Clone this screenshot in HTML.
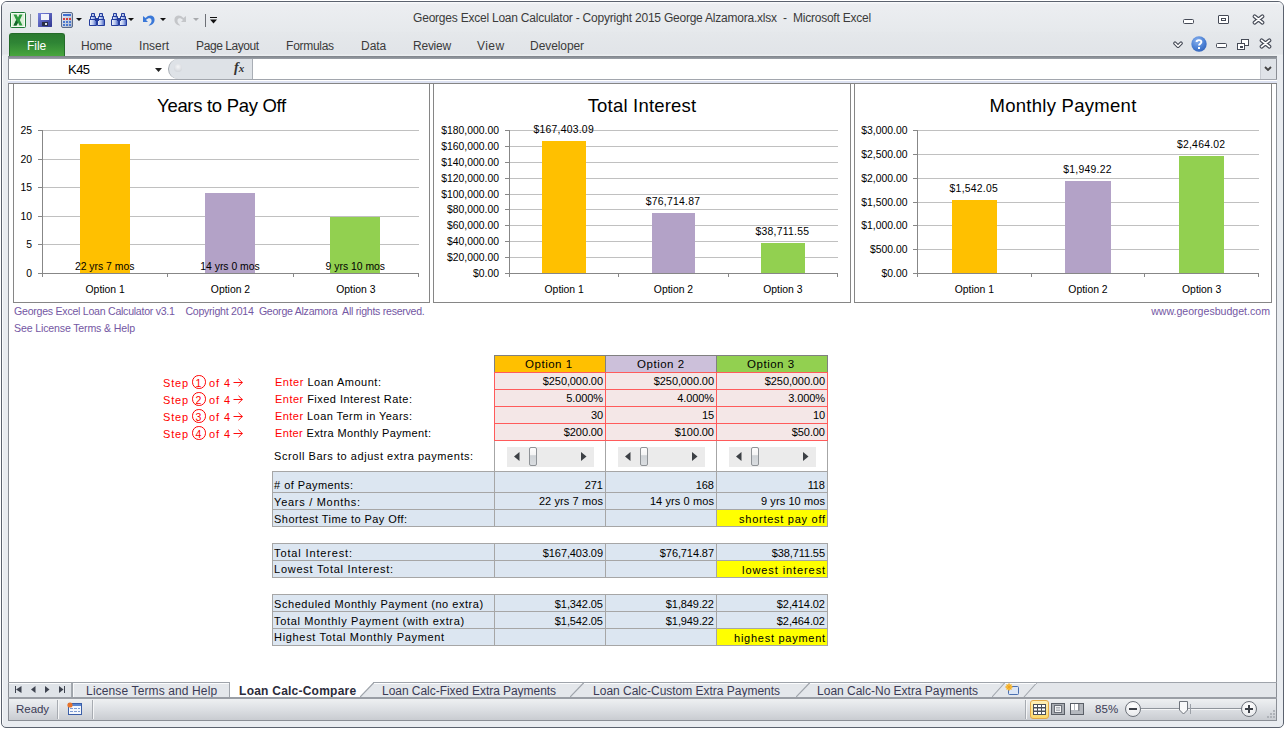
<!DOCTYPE html>
<html><head><meta charset="utf-8">
<style>
*{margin:0;padding:0;box-sizing:border-box}
html,body{width:1285px;height:729px;overflow:hidden;background:#fff;font-family:"Liberation Sans",sans-serif}
.a{position:absolute}
.t{position:absolute;white-space:nowrap;line-height:1}
#win{left:1px;top:1px;width:1283px;height:727px;border:1px solid #5b626e;border-radius:6px 6px 5px 5px;background:#e9ecf0;box-shadow:inset 1px 1px 0 #fafbfc;overflow:hidden}
</style></head><body>
<div id="win" class="a"></div>
<!-- title bar gradient -->
<div class="a" style="left:2px;top:2px;width:1281px;height:30px;border-radius:5px 5px 0 0;background:linear-gradient(#f7f8fa 0,#f7f8fa 1px,#eceef1 2px,#e6e9ec)"></div>
<div class="a" style="left:2px;top:32px;width:1281px;height:24px;background:linear-gradient(#e5e8eb,#e1e4e8 90%,#eef0f2)"></div>
<!-- ribbon dark line -->
<div class="a" style="left:8px;top:56px;width:1269px;height:3px;background:linear-gradient(#7d8289,#9ca1a8)"></div>
<!-- formula bar -->
<div class="a" style="left:8px;top:59px;width:1269px;height:20px;background:#fff;border-left:1px solid #8a8e95;border-right:1px solid #8a8e95"></div>
<div class="a" style="left:8px;top:79px;width:1269px;height:1px;background:#a2a6ad"></div>
<div class="a" style="left:8px;top:80px;width:1269px;height:1px;background:#fff"></div>
<div class="a" style="left:8px;top:81px;width:1269px;height:2px;background:#dde2f2"></div>
<div class="a" style="left:8px;top:83px;width:1269px;height:1px;background:#858585"></div>
<!-- sheet -->
<div class="a" style="left:8px;top:84px;width:1269px;height:599px;background:#fff;border-left:1px solid #8a8e95;border-right:1px solid #8a8e95"></div>
<!-- tab bar -->
<div class="a" style="left:8px;top:682px;width:1269px;height:1px;background:#9ea2a8"></div>
<div class="a" style="left:8px;top:683px;width:1269px;height:14px;background:#e3e6ea;border-left:1px solid #8a8e95;border-right:1px solid #8a8e95"></div>
<div class="a" style="left:8px;top:697px;width:1269px;height:2px;background:#9a9ea5"></div>
<!-- status bar -->
<div class="a" style="left:8px;top:699px;width:1269px;height:22px;background:linear-gradient(#eef0f2,#dcdfe3 50%,#c9ccd1);border-left:1px solid #8a8e95;border-right:1px solid #8a8e95;border-bottom:1px solid #8a8e95"></div>

<!-- QAT icons -->
<svg class="a" style="left:10px;top:12px" width="17" height="16" viewBox="0 0 17 16">
 <rect x="0.5" y="0.5" width="15" height="15" rx="1" fill="#f4fbf2" stroke="#1e7a36"/>
 <rect x="2" y="2" width="12" height="12" fill="#dcefd8"/>
 <path d="M3.5 2.5 L6.5 2.5 L8 5.5 L9.5 2.5 L12.5 2.5 L9.8 8 L12.5 13.5 L9.5 13.5 L8 10.5 L6.5 13.5 L3.5 13.5 L6.2 8 Z" fill="#2d9a3e"/>
 <path d="M6.2 8 L3.5 13.5 L6.5 13.5 L8 10.5 Z" fill="#13652a"/>
</svg>
<div class="a" style="left:30px;top:14px;width:1px;height:13px;background:#9197a0"></div>
<svg class="a" style="left:38px;top:13px" width="14" height="14" viewBox="0 0 14 14">
 <rect x="0" y="0" width="14" height="14" rx="1" fill="#4b55b8"/>
 <rect x="0" y="0" width="14" height="14" rx="1" fill="url(#sg)"/>
 <defs><linearGradient id="sg" x1="0" y1="0" x2="1" y2="1"><stop offset="0" stop-color="#7c86e0"/><stop offset="1" stop-color="#2f3590"/></linearGradient></defs>
 <rect x="3" y="1" width="8" height="6" fill="#f2f4fa"/>
 <rect x="4" y="9" width="6" height="4" fill="#2a2e44"/>
 <rect x="7" y="10" width="2" height="2" fill="#dfe3ef"/>
</svg>
<svg class="a" style="left:61px;top:12px" width="12" height="16" viewBox="0 0 12 16">
 <defs><linearGradient id="cg" x1="0" y1="0" x2="1" y2="1"><stop offset="0" stop-color="#e9eef8"/><stop offset="1" stop-color="#a9b5c9"/></linearGradient></defs>
 <rect x="0.5" y="0.5" width="11" height="15" rx="1.5" fill="url(#cg)" stroke="#5a6a88"/>
 <rect x="2" y="2" width="8" height="2" fill="#3f6fd0"/>
 <g fill="#d04040"><rect x="2" y="6" width="2" height="2"/><rect x="5" y="6" width="2" height="2"/><rect x="8" y="6" width="2" height="2"/></g>
 <g fill="#4a78cf"><rect x="2" y="9" width="2" height="2"/><rect x="5" y="9" width="2" height="2"/><rect x="8" y="9" width="2" height="2"/><rect x="2" y="12" width="2" height="2"/><rect x="5" y="12" width="2" height="2"/><rect x="8" y="12" width="2" height="2"/></g>
</svg>
<svg class="a" style="left:76px;top:18px" width="6" height="3" viewBox="0 0 6 3"><path d="M0 0H6L3 3Z" fill="#111"/></svg>
<svg class="a" style="left:89px;top:13px" width="16" height="13" viewBox="0 0 16 13">
 <defs><linearGradient id="bg1" x1="0" y1="0" x2="1" y2="0"><stop offset="0" stop-color="#f4f7fd"/><stop offset="0.5" stop-color="#b9c8ee"/><stop offset="1" stop-color="#3d5bc0"/></linearGradient></defs>
 <g fill="url(#bg1)" stroke="#233c9c" stroke-width="1">
 <path d="M2.5 0.5h3v3h1v3h1v6h-7v-6h1v-3h1z"/><path d="M10.5 0.5h3v3h1v3h1v6h-7v-6h1v-3h1z"/></g>
 <rect x="6" y="5" width="4" height="3" fill="#233c9c"/>
 <g fill="#233c9c"><rect x="1" y="6" width="6" height="1"/><rect x="9" y="6" width="6" height="1"/><rect x="2" y="3" width="4" height="1"/><rect x="10" y="3" width="4" height="1"/></g>
</svg>
<svg class="a" style="left:111px;top:13px" width="16" height="13" viewBox="0 0 16 13">
 <defs><linearGradient id="bg1" x1="0" y1="0" x2="1" y2="0"><stop offset="0" stop-color="#f4f7fd"/><stop offset="0.5" stop-color="#b9c8ee"/><stop offset="1" stop-color="#3d5bc0"/></linearGradient></defs>
 <g fill="url(#bg1)" stroke="#233c9c" stroke-width="1">
 <path d="M2.5 0.5h3v3h1v3h1v6h-7v-6h1v-3h1z"/><path d="M10.5 0.5h3v3h1v3h1v6h-7v-6h1v-3h1z"/></g>
 <rect x="6" y="5" width="4" height="3" fill="#233c9c"/>
 <g fill="#233c9c"><rect x="1" y="6" width="6" height="1"/><rect x="9" y="6" width="6" height="1"/><rect x="2" y="3" width="4" height="1"/><rect x="10" y="3" width="4" height="1"/></g>
</svg>
<svg class="a" style="left:128px;top:18px" width="6" height="3" viewBox="0 0 6 3"><path d="M0 0H6L3 3Z" fill="#111"/></svg>
<svg class="a" style="left:142px;top:13px" width="14" height="13" viewBox="0 0 14 13">
 <path d="M1 3 L1 9 L6 9 L4 7 C6 4.5 9 4.5 9.5 7 C10 9 8.5 11 6.5 12.5 C10 12.5 13 10 12.5 6 C12 2 7 1 3.5 5 Z" fill="#3a78d8"/>
</svg>
<svg class="a" style="left:160px;top:18px" width="6" height="3" viewBox="0 0 6 3"><path d="M0 0H6L3 3Z" fill="#111"/></svg>
<svg class="a" style="left:173px;top:13px" width="14" height="13" viewBox="0 0 14 13">
 <path d="M13 3 L13 9 L8 9 L10 7 C8 4.5 5 4.5 4.5 7 C4 9 5.5 11 7.5 12.5 C4 12.5 1 10 1.5 6 C2 2 7 1 10.5 5 Z" fill="#c4c6c9"/>
</svg>
<svg class="a" style="left:193px;top:18px" width="6" height="3" viewBox="0 0 6 3"><path d="M0 0H6L3 3Z" fill="#a8aaad"/></svg>
<div class="a" style="left:205px;top:14px;width:1px;height:13px;background:#6d7076"></div>
<svg class="a" style="left:210px;top:17px" width="7" height="7" viewBox="0 0 7 7"><rect x="0" y="0" width="7" height="1" fill="#111"/><path d="M0 2.5H7L3.5 6.5Z" fill="#111"/></svg>
<!-- title -->
<!-- window controls -->
<div class="a" style="left:1183px;top:19px;width:11px;height:5px;border:1px solid #454a56;border-radius:1.5px;background:#fff"></div>
<div class="a" style="left:1218px;top:15px;width:11px;height:9px;border:1px solid #454a56;border-radius:1px;background:#fff"></div>
<div class="a" style="left:1221px;top:18px;width:5px;height:3px;border:1px solid #454a56;background:#fff"></div>
<svg class="a" style="left:1252px;top:14px" width="13" height="11" viewBox="0 0 13 11"><path d="M2.6 2.4 L10.4 8.6 M10.4 2.4 L2.6 8.6" stroke="#454a56" stroke-width="3.9" stroke-linecap="round"/><path d="M2.6 2.4 L10.4 8.6 M10.4 2.4 L2.6 8.6" stroke="#fff" stroke-width="1.8" stroke-linecap="round"/></svg>
<!-- ribbon tabs -->
<div class="a" style="left:9px;top:33px;width:56px;height:23px;border-radius:3px 3px 0 0;background:linear-gradient(#2b7a30,#2f8535 40%,#49a63e);border:1px solid #246b29;border-bottom:none"></div>
<!-- ribbon right controls -->
<svg class="a" style="left:1173px;top:41px" width="10" height="8" viewBox="0 0 10 8"><path d="M2 2.2 L5 5.2 L8 2.2" stroke="#454a56" stroke-width="3.6" fill="none" stroke-linecap="round" stroke-linejoin="round"/><path d="M2 2.2 L5 5.2 L8 2.2" stroke="#fff" stroke-width="1.5" fill="none" stroke-linecap="round" stroke-linejoin="round"/></svg>
<svg class="a" style="left:1191px;top:36px" width="16" height="16" viewBox="0 0 16 16">
 <defs><radialGradient id="hg" cx="0.4" cy="0.3" r="0.8"><stop offset="0" stop-color="#8bb3ef"/><stop offset="0.6" stop-color="#4a7fd3"/><stop offset="1" stop-color="#2f5fb6"/></radialGradient></defs>
 <circle cx="8" cy="8" r="7.7" fill="url(#hg)"/>
 <path d="M5.6 6 C5.6 3.5 10.4 3.5 10.4 6 C10.4 7.6 8 7.8 8 9.6" stroke="#fff" stroke-width="1.9" fill="none"/>
 <rect x="7" y="11" width="2" height="2" fill="#fff"/>
</svg>
<div class="a" style="left:1216px;top:43px;width:11px;height:5px;border:1px solid #454a56;border-radius:1.5px;background:#fff"></div>
<div class="a" style="left:1241px;top:39px;width:8px;height:7px;border:1px solid #454a56;background:#fff"></div>
<div class="a" style="left:1237px;top:43px;width:8px;height:7px;border:1px solid #454a56;background:#fff"></div>
<div class="a" style="left:1240px;top:46px;width:3px;height:2px;border:1px solid #454a56;background:#fff"></div>
<svg class="a" style="left:1259px;top:38px" width="13" height="11" viewBox="0 0 13 11"><path d="M2.6 2.4 L10.4 8.6 M10.4 2.4 L2.6 8.6" stroke="#454a56" stroke-width="3.9" stroke-linecap="round"/><path d="M2.6 2.4 L10.4 8.6 M10.4 2.4 L2.6 8.6" stroke="#fff" stroke-width="1.8" stroke-linecap="round"/></svg>
<!-- formula bar contents -->
<svg class="a" style="left:155px;top:68px" width="7" height="4" viewBox="0 0 7 4"><path d="M0 0H7L3.5 4Z" fill="#222"/></svg>
<div class="a" style="left:168px;top:59px;width:85px;height:20px;background:#dee2e7;border-radius:10px 0 0 10px;border:1px solid #a7acb3;border-right:1px solid #a9aeb5;border-top:none;border-bottom:none"></div>
<div class="a" style="left:174px;top:64px;width:8px;height:8px;border-radius:50%;background:radial-gradient(circle at 50% 35%,#f4f5f7,#c9cdd3)"></div>
<div class="t" style="left:234px;top:61px;font-family:'Liberation Serif',serif;font-style:italic;font-weight:bold;font-size:14px;color:#333">f<span style="font-size:11px">x</span></div>
<div class="a" style="left:1260px;top:59px;width:16px;height:20px;background:#dfe3e8;border-left:1px solid #c9cdd3"></div>
<svg class="a" style="left:1264px;top:66px" width="8" height="5" viewBox="0 0 8 5"><path d="M1 1 L4 4 L7 1" stroke="#444" stroke-width="1.8" fill="none"/></svg>
<div class="a" style="left:13px;top:84px;width:417px;height:219px;background:#fff;border:1px solid #868686;border-top:none"></div>
<div class="t" style="left:21.5px;width:400px;top:96.5px;font-size:18.5px;color:#000;text-align:center;letter-spacing:-0.3px">Years to Pay Off</div>
<div class="a" style="left:42px;top:130px;width:377px;height:1px;background:#c0c0c0;"></div>
<div class="a" style="left:42px;top:159px;width:377px;height:1px;background:#c0c0c0;"></div>
<div class="a" style="left:42px;top:187px;width:377px;height:1px;background:#c0c0c0;"></div>
<div class="a" style="left:42px;top:216px;width:377px;height:1px;background:#c0c0c0;"></div>
<div class="a" style="left:42px;top:244px;width:377px;height:1px;background:#c0c0c0;"></div>
<div class="a" style="left:42px;top:130px;width:1px;height:144px;background:#878787;"></div>
<div class="a" style="left:38px;top:130px;width:4px;height:1px;background:#878787;"></div>
<div class="a" style="left:38px;top:159px;width:4px;height:1px;background:#878787;"></div>
<div class="a" style="left:38px;top:187px;width:4px;height:1px;background:#878787;"></div>
<div class="a" style="left:38px;top:216px;width:4px;height:1px;background:#878787;"></div>
<div class="a" style="left:38px;top:244px;width:4px;height:1px;background:#878787;"></div>
<div class="a" style="left:38px;top:273px;width:4px;height:1px;background:#878787;"></div>
<div class="t" style="right:1253px;top:125.5px;font-size:10.4px;color:#000;text-align:right;">25</div>
<div class="t" style="right:1253px;top:154.5px;font-size:10.4px;color:#000;text-align:right;">20</div>
<div class="t" style="right:1253px;top:182.5px;font-size:10.4px;color:#000;text-align:right;">15</div>
<div class="t" style="right:1253px;top:211.5px;font-size:10.4px;color:#000;text-align:right;">10</div>
<div class="t" style="right:1253px;top:239.5px;font-size:10.4px;color:#000;text-align:right;">5</div>
<div class="t" style="right:1253px;top:268.5px;font-size:10.4px;color:#000;text-align:right;">0</div>
<div class="a" style="left:80px;top:144px;width:50px;height:129px;background:#ffc000;"></div>
<div class="a" style="left:205px;top:193px;width:50px;height:80px;background:#b3a2c7;"></div>
<div class="a" style="left:330px;top:217px;width:50px;height:56px;background:#92d050;"></div>
<div class="a" style="left:42px;top:273px;width:377px;height:1px;background:#878787;"></div>
<div class="a" style="left:42px;top:274px;width:1px;height:3px;background:#878787;"></div>
<div class="a" style="left:167px;top:274px;width:1px;height:3px;background:#878787;"></div>
<div class="a" style="left:293px;top:274px;width:1px;height:3px;background:#878787;"></div>
<div class="a" style="left:418px;top:274px;width:1px;height:3px;background:#878787;"></div>
<div class="t" style="left:-94.83333333333334px;width:400px;top:285px;font-size:10.4px;color:#000;text-align:center;">Option 1</div>
<div class="t" style="left:30.5px;width:400px;top:285px;font-size:10.4px;color:#000;text-align:center;">Option 2</div>
<div class="t" style="left:155.83333333333331px;width:400px;top:285px;font-size:10.4px;color:#000;text-align:center;">Option 3</div>
<div class="t" style="left:-95.33333333333334px;width:400px;top:262px;font-size:10.4px;color:#000;text-align:center;letter-spacing:0px">22 yrs 7 mos</div>
<div class="t" style="left:30.0px;width:400px;top:262px;font-size:10.4px;color:#000;text-align:center;letter-spacing:0px">14 yrs 0 mos</div>
<div class="t" style="left:155.33333333333331px;width:400px;top:262px;font-size:10.4px;color:#000;text-align:center;letter-spacing:0px">9 yrs 10 mos</div>
<div class="a" style="left:433px;top:84px;width:418px;height:219px;background:#fff;border:1px solid #868686;border-top:none"></div>
<div class="t" style="left:442.0px;width:400px;top:96.5px;font-size:18.5px;color:#000;text-align:center;letter-spacing:0.2px">Total Interest</div>
<div class="a" style="left:509px;top:130px;width:329px;height:1px;background:#c0c0c0;"></div>
<div class="a" style="left:509px;top:146px;width:329px;height:1px;background:#c0c0c0;"></div>
<div class="a" style="left:509px;top:162px;width:329px;height:1px;background:#c0c0c0;"></div>
<div class="a" style="left:509px;top:178px;width:329px;height:1px;background:#c0c0c0;"></div>
<div class="a" style="left:509px;top:194px;width:329px;height:1px;background:#c0c0c0;"></div>
<div class="a" style="left:509px;top:209px;width:329px;height:1px;background:#c0c0c0;"></div>
<div class="a" style="left:509px;top:225px;width:329px;height:1px;background:#c0c0c0;"></div>
<div class="a" style="left:509px;top:241px;width:329px;height:1px;background:#c0c0c0;"></div>
<div class="a" style="left:509px;top:257px;width:329px;height:1px;background:#c0c0c0;"></div>
<div class="a" style="left:509px;top:130px;width:1px;height:144px;background:#878787;"></div>
<div class="a" style="left:505px;top:130px;width:4px;height:1px;background:#878787;"></div>
<div class="a" style="left:505px;top:146px;width:4px;height:1px;background:#878787;"></div>
<div class="a" style="left:505px;top:162px;width:4px;height:1px;background:#878787;"></div>
<div class="a" style="left:505px;top:178px;width:4px;height:1px;background:#878787;"></div>
<div class="a" style="left:505px;top:194px;width:4px;height:1px;background:#878787;"></div>
<div class="a" style="left:505px;top:209px;width:4px;height:1px;background:#878787;"></div>
<div class="a" style="left:505px;top:225px;width:4px;height:1px;background:#878787;"></div>
<div class="a" style="left:505px;top:241px;width:4px;height:1px;background:#878787;"></div>
<div class="a" style="left:505px;top:257px;width:4px;height:1px;background:#878787;"></div>
<div class="a" style="left:505px;top:273px;width:4px;height:1px;background:#878787;"></div>
<div class="t" style="right:786px;top:125.5px;font-size:10.4px;color:#000;text-align:right;">$180,000.00</div>
<div class="t" style="right:786px;top:141.5px;font-size:10.4px;color:#000;text-align:right;">$160,000.00</div>
<div class="t" style="right:786px;top:157.5px;font-size:10.4px;color:#000;text-align:right;">$140,000.00</div>
<div class="t" style="right:786px;top:173.5px;font-size:10.4px;color:#000;text-align:right;">$120,000.00</div>
<div class="t" style="right:786px;top:189.5px;font-size:10.4px;color:#000;text-align:right;">$100,000.00</div>
<div class="t" style="right:786px;top:204.5px;font-size:10.4px;color:#000;text-align:right;">$80,000.00</div>
<div class="t" style="right:786px;top:220.5px;font-size:10.4px;color:#000;text-align:right;">$60,000.00</div>
<div class="t" style="right:786px;top:236.5px;font-size:10.4px;color:#000;text-align:right;">$40,000.00</div>
<div class="t" style="right:786px;top:252.5px;font-size:10.4px;color:#000;text-align:right;">$20,000.00</div>
<div class="t" style="right:786px;top:268.5px;font-size:10.4px;color:#000;text-align:right;">$0.00</div>
<div class="a" style="left:542px;top:141px;width:44px;height:132px;background:#ffc000;"></div>
<div class="a" style="left:652px;top:213px;width:43px;height:60px;background:#b3a2c7;"></div>
<div class="a" style="left:761px;top:243px;width:44px;height:30px;background:#92d050;"></div>
<div class="a" style="left:509px;top:273px;width:329px;height:1px;background:#878787;"></div>
<div class="a" style="left:509px;top:274px;width:1px;height:3px;background:#878787;"></div>
<div class="a" style="left:618px;top:274px;width:1px;height:3px;background:#878787;"></div>
<div class="a" style="left:728px;top:274px;width:1px;height:3px;background:#878787;"></div>
<div class="a" style="left:837px;top:274px;width:1px;height:3px;background:#878787;"></div>
<div class="t" style="left:364.16666666666663px;width:400px;top:285px;font-size:10.4px;color:#000;text-align:center;">Option 1</div>
<div class="t" style="left:473.5px;width:400px;top:285px;font-size:10.4px;color:#000;text-align:center;">Option 2</div>
<div class="t" style="left:582.8333333333333px;width:400px;top:285px;font-size:10.4px;color:#000;text-align:center;">Option 3</div>
<div class="t" style="left:363.66666666666663px;width:400px;top:124.5px;font-size:10.4px;color:#000;text-align:center;letter-spacing:0.25px">$167,403.09</div>
<div class="t" style="left:473.0px;width:400px;top:196.5px;font-size:10.4px;color:#000;text-align:center;letter-spacing:0.25px">$76,714.87</div>
<div class="t" style="left:582.3333333333333px;width:400px;top:226.5px;font-size:10.4px;color:#000;text-align:center;letter-spacing:0.25px">$38,711.55</div>
<div class="a" style="left:854px;top:84px;width:418px;height:219px;background:#fff;border:1px solid #868686;border-top:none"></div>
<div class="t" style="left:863.0px;width:400px;top:96.5px;font-size:18.5px;color:#000;text-align:center;letter-spacing:0.28px">Monthly Payment</div>
<div class="a" style="left:917px;top:130px;width:342px;height:1px;background:#c0c0c0;"></div>
<div class="a" style="left:917px;top:154px;width:342px;height:1px;background:#c0c0c0;"></div>
<div class="a" style="left:917px;top:178px;width:342px;height:1px;background:#c0c0c0;"></div>
<div class="a" style="left:917px;top:202px;width:342px;height:1px;background:#c0c0c0;"></div>
<div class="a" style="left:917px;top:225px;width:342px;height:1px;background:#c0c0c0;"></div>
<div class="a" style="left:917px;top:249px;width:342px;height:1px;background:#c0c0c0;"></div>
<div class="a" style="left:917px;top:130px;width:1px;height:144px;background:#878787;"></div>
<div class="a" style="left:913px;top:130px;width:4px;height:1px;background:#878787;"></div>
<div class="a" style="left:913px;top:154px;width:4px;height:1px;background:#878787;"></div>
<div class="a" style="left:913px;top:178px;width:4px;height:1px;background:#878787;"></div>
<div class="a" style="left:913px;top:202px;width:4px;height:1px;background:#878787;"></div>
<div class="a" style="left:913px;top:225px;width:4px;height:1px;background:#878787;"></div>
<div class="a" style="left:913px;top:249px;width:4px;height:1px;background:#878787;"></div>
<div class="a" style="left:913px;top:273px;width:4px;height:1px;background:#878787;"></div>
<div class="t" style="right:377.5px;top:125.5px;font-size:10.4px;color:#000;text-align:right;">$3,000.00</div>
<div class="t" style="right:377.5px;top:149.5px;font-size:10.4px;color:#000;text-align:right;">$2,500.00</div>
<div class="t" style="right:377.5px;top:173.5px;font-size:10.4px;color:#000;text-align:right;">$2,000.00</div>
<div class="t" style="right:377.5px;top:197.5px;font-size:10.4px;color:#000;text-align:right;">$1,500.00</div>
<div class="t" style="right:377.5px;top:220.5px;font-size:10.4px;color:#000;text-align:right;">$1,000.00</div>
<div class="t" style="right:377.5px;top:244.5px;font-size:10.4px;color:#000;text-align:right;">$500.00</div>
<div class="t" style="right:377.5px;top:268.5px;font-size:10.4px;color:#000;text-align:right;">$0.00</div>
<div class="a" style="left:952px;top:200px;width:45px;height:73px;background:#ffc000;"></div>
<div class="a" style="left:1065px;top:181px;width:46px;height:92px;background:#b3a2c7;"></div>
<div class="a" style="left:1179px;top:156px;width:45px;height:117px;background:#92d050;"></div>
<div class="a" style="left:917px;top:273px;width:342px;height:1px;background:#878787;"></div>
<div class="a" style="left:917px;top:274px;width:1px;height:3px;background:#878787;"></div>
<div class="a" style="left:1031px;top:274px;width:1px;height:3px;background:#878787;"></div>
<div class="a" style="left:1144px;top:274px;width:1px;height:3px;background:#878787;"></div>
<div class="a" style="left:1258px;top:274px;width:1px;height:3px;background:#878787;"></div>
<div class="t" style="left:774.3333333333334px;width:400px;top:285px;font-size:10.4px;color:#000;text-align:center;">Option 1</div>
<div class="t" style="left:888.0px;width:400px;top:285px;font-size:10.4px;color:#000;text-align:center;">Option 2</div>
<div class="t" style="left:1001.6666666666667px;width:400px;top:285px;font-size:10.4px;color:#000;text-align:center;">Option 3</div>
<div class="t" style="left:773.8333333333334px;width:400px;top:183.5px;font-size:10.4px;color:#000;text-align:center;letter-spacing:0.25px">$1,542.05</div>
<div class="t" style="left:887.5px;width:400px;top:164.5px;font-size:10.4px;color:#000;text-align:center;letter-spacing:0.25px">$1,949.22</div>
<div class="t" style="left:1001.1666666666667px;width:400px;top:139.5px;font-size:10.4px;color:#000;text-align:center;letter-spacing:0.25px">$2,464.02</div>
<div class="a" style="left:494px;top:355px;width:334px;height:18px;background:#808080;"></div>
<div class="a" style="left:495px;top:356px;width:110px;height:16px;background:#ffc000;"></div>
<div class="a" style="left:606px;top:356px;width:110px;height:16px;background:#ccc0da;"></div>
<div class="a" style="left:717px;top:356px;width:110px;height:16px;background:#92d050;"></div>
<div class="a" style="left:494px;top:372px;width:334px;height:69px;background:#ff5b5b;"></div>
<div class="a" style="left:495px;top:373px;width:110px;height:16px;background:#f4e7e7;"></div>
<div class="a" style="left:606px;top:373px;width:110px;height:16px;background:#f4e7e7;"></div>
<div class="a" style="left:717px;top:373px;width:110px;height:16px;background:#f4e7e7;"></div>
<div class="a" style="left:495px;top:390px;width:110px;height:16px;background:#f4e7e7;"></div>
<div class="a" style="left:606px;top:390px;width:110px;height:16px;background:#f4e7e7;"></div>
<div class="a" style="left:717px;top:390px;width:110px;height:16px;background:#f4e7e7;"></div>
<div class="a" style="left:495px;top:407px;width:110px;height:16px;background:#f4e7e7;"></div>
<div class="a" style="left:606px;top:407px;width:110px;height:16px;background:#f4e7e7;"></div>
<div class="a" style="left:717px;top:407px;width:110px;height:16px;background:#f4e7e7;"></div>
<div class="a" style="left:495px;top:424px;width:110px;height:16px;background:#f4e7e7;"></div>
<div class="a" style="left:606px;top:424px;width:110px;height:16px;background:#f4e7e7;"></div>
<div class="a" style="left:717px;top:424px;width:110px;height:16px;background:#f4e7e7;"></div>
<div class="a" style="left:494px;top:441px;width:1px;height:30px;background:#a6a6a6;"></div>
<div class="a" style="left:605px;top:441px;width:1px;height:30px;background:#a6a6a6;"></div>
<div class="a" style="left:716px;top:441px;width:1px;height:30px;background:#a6a6a6;"></div>
<div class="a" style="left:827px;top:441px;width:1px;height:30px;background:#a6a6a6;"></div>
<div class="a" style="left:272px;top:471px;width:556px;height:56px;background:#a6a6a6;"></div>
<div class="a" style="left:273px;top:472px;width:221px;height:20px;background:#dce6f1;"></div>
<div class="a" style="left:495px;top:472px;width:110px;height:20px;background:#dce6f1;"></div>
<div class="a" style="left:606px;top:472px;width:110px;height:20px;background:#dce6f1;"></div>
<div class="a" style="left:717px;top:472px;width:110px;height:20px;background:#dce6f1;"></div>
<div class="a" style="left:273px;top:493px;width:221px;height:16px;background:#dce6f1;"></div>
<div class="a" style="left:495px;top:493px;width:110px;height:16px;background:#dce6f1;"></div>
<div class="a" style="left:606px;top:493px;width:110px;height:16px;background:#dce6f1;"></div>
<div class="a" style="left:717px;top:493px;width:110px;height:16px;background:#dce6f1;"></div>
<div class="a" style="left:273px;top:510px;width:221px;height:16px;background:#dce6f1;"></div>
<div class="a" style="left:495px;top:510px;width:110px;height:16px;background:#dce6f1;"></div>
<div class="a" style="left:606px;top:510px;width:110px;height:16px;background:#dce6f1;"></div>
<div class="a" style="left:717px;top:510px;width:110px;height:16px;background:#dce6f1;"></div>
<div class="a" style="left:272px;top:543px;width:556px;height:35px;background:#a6a6a6;"></div>
<div class="a" style="left:273px;top:544px;width:221px;height:16px;background:#dce6f1;"></div>
<div class="a" style="left:495px;top:544px;width:110px;height:16px;background:#dce6f1;"></div>
<div class="a" style="left:606px;top:544px;width:110px;height:16px;background:#dce6f1;"></div>
<div class="a" style="left:717px;top:544px;width:110px;height:16px;background:#dce6f1;"></div>
<div class="a" style="left:273px;top:561px;width:221px;height:16px;background:#dce6f1;"></div>
<div class="a" style="left:495px;top:561px;width:110px;height:16px;background:#dce6f1;"></div>
<div class="a" style="left:606px;top:561px;width:110px;height:16px;background:#dce6f1;"></div>
<div class="a" style="left:717px;top:561px;width:110px;height:16px;background:#dce6f1;"></div>
<div class="a" style="left:272px;top:594px;width:556px;height:52px;background:#a6a6a6;"></div>
<div class="a" style="left:273px;top:595px;width:221px;height:16px;background:#dce6f1;"></div>
<div class="a" style="left:495px;top:595px;width:110px;height:16px;background:#dce6f1;"></div>
<div class="a" style="left:606px;top:595px;width:110px;height:16px;background:#dce6f1;"></div>
<div class="a" style="left:717px;top:595px;width:110px;height:16px;background:#dce6f1;"></div>
<div class="a" style="left:273px;top:612px;width:221px;height:16px;background:#dce6f1;"></div>
<div class="a" style="left:495px;top:612px;width:110px;height:16px;background:#dce6f1;"></div>
<div class="a" style="left:606px;top:612px;width:110px;height:16px;background:#dce6f1;"></div>
<div class="a" style="left:717px;top:612px;width:110px;height:16px;background:#dce6f1;"></div>
<div class="a" style="left:273px;top:629px;width:221px;height:16px;background:#dce6f1;"></div>
<div class="a" style="left:495px;top:629px;width:110px;height:16px;background:#dce6f1;"></div>
<div class="a" style="left:606px;top:629px;width:110px;height:16px;background:#dce6f1;"></div>
<div class="a" style="left:717px;top:629px;width:110px;height:16px;background:#dce6f1;"></div>
<div class="a" style="left:717px;top:510px;width:110px;height:16px;background:#ffff00;"></div>
<div class="a" style="left:717px;top:561px;width:110px;height:16px;background:#ffff00;"></div>
<div class="a" style="left:717px;top:629px;width:110px;height:16px;background:#ffff00;"></div>
<div class="t" style="left:525.10px;top:359px;font-size:11.5px;color:#000;letter-spacing:0.504px;">Option 1</div>
<div class="t" style="left:637.10px;top:359px;font-size:11.5px;color:#000;letter-spacing:0.504px;">Option 2</div>
<div class="t" style="left:747.10px;top:359px;font-size:11.5px;color:#000;letter-spacing:0.504px;">Option 3</div>
<div class="t" style="left:542.84px;top:376px;font-size:11px;color:#000;letter-spacing:-0.100px;">$250,000.00</div>
<div class="t" style="left:653.84px;top:376px;font-size:11px;color:#000;letter-spacing:-0.100px;">$250,000.00</div>
<div class="t" style="left:764.84px;top:376px;font-size:11px;color:#000;letter-spacing:-0.100px;">$250,000.00</div>
<div class="t" style="left:566.21px;top:393px;font-size:11px;color:#000;letter-spacing:-0.100px;">5.000%</div>
<div class="t" style="left:677.21px;top:393px;font-size:11px;color:#000;letter-spacing:-0.100px;">4.000%</div>
<div class="t" style="left:788.21px;top:393px;font-size:11px;color:#000;letter-spacing:-0.100px;">3.000%</div>
<div class="t" style="left:590.89px;top:410px;font-size:11px;color:#000;letter-spacing:-0.100px;">30</div>
<div class="t" style="left:701.89px;top:410px;font-size:11px;color:#000;letter-spacing:-0.100px;">15</div>
<div class="t" style="left:812.89px;top:410px;font-size:11px;color:#000;letter-spacing:-0.100px;">10</div>
<div class="t" style="left:563.84px;top:427px;font-size:11px;color:#000;letter-spacing:-0.100px;">$200.00</div>
<div class="t" style="left:674.84px;top:427px;font-size:11px;color:#000;letter-spacing:-0.100px;">$100.00</div>
<div class="t" style="left:791.84px;top:427px;font-size:11px;color:#000;letter-spacing:-0.100px;">$50.00</div>
<div class="t" style="left:584.83px;top:480px;font-size:11px;color:#000;letter-spacing:-0.100px;">271</div>
<div class="t" style="left:695.83px;top:480px;font-size:11px;color:#000;letter-spacing:-0.100px;">168</div>
<div class="t" style="left:807.65px;top:480px;font-size:11px;color:#000;letter-spacing:-0.100px;">118</div>
<div class="t" style="left:538.92px;top:496px;font-size:11px;color:#000;letter-spacing:0.100px;">22 yrs 7 mos</div>
<div class="t" style="left:649.92px;top:496px;font-size:11px;color:#000;letter-spacing:0.100px;">14 yrs 0 mos</div>
<div class="t" style="left:760.92px;top:496px;font-size:11px;color:#000;letter-spacing:0.100px;">9 yrs 10 mos</div>
<div class="t" style="left:542.84px;top:548px;font-size:11px;color:#000;letter-spacing:-0.100px;">$167,403.09</div>
<div class="t" style="left:659.85px;top:548px;font-size:11px;color:#000;letter-spacing:-0.100px;">$76,714.87</div>
<div class="t" style="left:771.67px;top:548px;font-size:11px;color:#000;letter-spacing:-0.100px;">$38,711.55</div>
<div class="t" style="left:554.85px;top:599px;font-size:11px;color:#000;letter-spacing:-0.100px;">$1,342.05</div>
<div class="t" style="left:665.85px;top:599px;font-size:11px;color:#000;letter-spacing:-0.100px;">$1,849.22</div>
<div class="t" style="left:776.85px;top:599px;font-size:11px;color:#000;letter-spacing:-0.100px;">$2,414.02</div>
<div class="t" style="left:554.85px;top:616px;font-size:11px;color:#000;letter-spacing:-0.100px;">$1,542.05</div>
<div class="t" style="left:665.85px;top:616px;font-size:11px;color:#000;letter-spacing:-0.100px;">$1,949.22</div>
<div class="t" style="left:776.85px;top:616px;font-size:11px;color:#000;letter-spacing:-0.100px;">$2,464.02</div>
<div class="t" style="left:739.10px;top:514px;font-size:11px;color:#000;letter-spacing:0.732px;">shortest pay off</div>
<div class="t" style="left:742.10px;top:565px;font-size:11px;color:#000;letter-spacing:0.908px;">lowest interest</div>
<div class="t" style="left:734.10px;top:633px;font-size:11px;color:#000;letter-spacing:0.733px;">highest payment</div>
<div class="t" style="left:275.00px;top:377px;font-size:11px;letter-spacing:0.515px;color:#000"><span style="color:#ff0000">Enter</span> Loan Amount:</div>
<div class="t" style="left:275.00px;top:394px;font-size:11px;letter-spacing:0.466px;color:#000"><span style="color:#ff0000">Enter</span> Fixed Interest Rate:</div>
<div class="t" style="left:275.00px;top:411px;font-size:11px;letter-spacing:0.442px;color:#000"><span style="color:#ff0000">Enter</span> Loan Term in Years:</div>
<div class="t" style="left:275.00px;top:428px;font-size:11px;letter-spacing:0.365px;color:#000"><span style="color:#ff0000">Enter</span> Extra Monthly Payment:</div>
<div class="t" style="left:274.10px;top:451px;font-size:11px;color:#000;letter-spacing:0.552px;">Scroll Bars to adjust extra payments:</div>
<div class="t" style="left:274.10px;top:480px;font-size:11px;color:#000;letter-spacing:0.433px;"># of Payments:</div>
<div class="t" style="left:274.10px;top:497px;font-size:11px;color:#000;letter-spacing:0.714px;">Years / Months:</div>
<div class="t" style="left:274.10px;top:514px;font-size:11px;color:#000;letter-spacing:0.429px;">Shortest Time to Pay Off:</div>
<div class="t" style="left:274.10px;top:548px;font-size:11px;color:#000;letter-spacing:0.853px;">Total Interest:</div>
<div class="t" style="left:274.10px;top:564px;font-size:11px;color:#000;letter-spacing:0.727px;">Lowest Total Interest:</div>
<div class="t" style="left:274.10px;top:599px;font-size:11px;color:#000;letter-spacing:0.539px;">Scheduled Monthly Payment (no extra)</div>
<div class="t" style="left:274.10px;top:616px;font-size:11px;color:#000;letter-spacing:0.644px;">Total Monthly Payment (with extra)</div>
<div class="t" style="left:274.10px;top:632px;font-size:11px;color:#000;letter-spacing:0.664px;">Highest Total Monthly Payment</div>
<div class="t" style="left:163.10px;top:378px;font-size:11px;color:#ff0000;letter-spacing:0.798px;">Step</div>
<div class="a" style="left:192px;top:375px;width:13.5px;height:13.5px;border:1px solid #ff0000;border-radius:50%"></div>
<div class="t" style="left:195.5px;top:378px;font-size:10.5px;color:#ff0000">1</div>
<div class="t" style="left:209.10px;top:378px;font-size:11px;color:#ff0000;letter-spacing:0.877px;">of 4</div>
<svg class="a" style="left:233px;top:378px" width="11" height="10" viewBox="0 0 11 10"><path d="M0.5 4.5H9.5M5.5 0.8L9.3 4.5L5.5 8.2" stroke="#ff0000" stroke-width="0.95" fill="none"/></svg>
<div class="t" style="left:163.10px;top:395px;font-size:11px;color:#ff0000;letter-spacing:0.798px;">Step</div>
<div class="a" style="left:192px;top:392px;width:13.5px;height:13.5px;border:1px solid #ff0000;border-radius:50%"></div>
<div class="t" style="left:195.5px;top:395px;font-size:10.5px;color:#ff0000">2</div>
<div class="t" style="left:209.10px;top:395px;font-size:11px;color:#ff0000;letter-spacing:0.877px;">of 4</div>
<svg class="a" style="left:233px;top:395px" width="11" height="10" viewBox="0 0 11 10"><path d="M0.5 4.5H9.5M5.5 0.8L9.3 4.5L5.5 8.2" stroke="#ff0000" stroke-width="0.95" fill="none"/></svg>
<div class="t" style="left:163.10px;top:412px;font-size:11px;color:#ff0000;letter-spacing:0.798px;">Step</div>
<div class="a" style="left:192px;top:409px;width:13.5px;height:13.5px;border:1px solid #ff0000;border-radius:50%"></div>
<div class="t" style="left:195.5px;top:412px;font-size:10.5px;color:#ff0000">3</div>
<div class="t" style="left:209.10px;top:412px;font-size:11px;color:#ff0000;letter-spacing:0.877px;">of 4</div>
<svg class="a" style="left:233px;top:412px" width="11" height="10" viewBox="0 0 11 10"><path d="M0.5 4.5H9.5M5.5 0.8L9.3 4.5L5.5 8.2" stroke="#ff0000" stroke-width="0.95" fill="none"/></svg>
<div class="t" style="left:163.10px;top:429px;font-size:11px;color:#ff0000;letter-spacing:0.798px;">Step</div>
<div class="a" style="left:192px;top:426px;width:13.5px;height:13.5px;border:1px solid #ff0000;border-radius:50%"></div>
<div class="t" style="left:195.5px;top:429px;font-size:10.5px;color:#ff0000">4</div>
<div class="t" style="left:209.10px;top:429px;font-size:11px;color:#ff0000;letter-spacing:0.877px;">of 4</div>
<svg class="a" style="left:233px;top:429px" width="11" height="10" viewBox="0 0 11 10"><path d="M0.5 4.5H9.5M5.5 0.8L9.3 4.5L5.5 8.2" stroke="#ff0000" stroke-width="0.95" fill="none"/></svg>
<div class="a" style="left:507px;top:447px;width:87px;height:20px;background:#ebebeb"></div>
<svg class="a" style="left:514px;top:452px" width="6" height="9" viewBox="0 0 6 9"><path d="M5.5 0L0 4.5L5.5 9Z" fill="#3c4045"/></svg>
<svg class="a" style="left:581px;top:452px" width="6" height="9" viewBox="0 0 6 9"><path d="M0 0L5.5 4.5L0 9Z" fill="#3c4045"/></svg>
<div class="a" style="left:529px;top:447px;width:8px;height:19px;border:1px solid #8f9397;border-radius:2px;background:linear-gradient(#fdfdfd 0,#f4f4f4 40%,#cfd3d7 45%,#dadde0)"></div>
<div class="a" style="left:618px;top:447px;width:87px;height:20px;background:#ebebeb"></div>
<svg class="a" style="left:625px;top:452px" width="6" height="9" viewBox="0 0 6 9"><path d="M5.5 0L0 4.5L5.5 9Z" fill="#3c4045"/></svg>
<svg class="a" style="left:692px;top:452px" width="6" height="9" viewBox="0 0 6 9"><path d="M0 0L5.5 4.5L0 9Z" fill="#3c4045"/></svg>
<div class="a" style="left:640px;top:447px;width:8px;height:19px;border:1px solid #8f9397;border-radius:2px;background:linear-gradient(#fdfdfd 0,#f4f4f4 40%,#cfd3d7 45%,#dadde0)"></div>
<div class="a" style="left:729px;top:447px;width:87px;height:20px;background:#ebebeb"></div>
<svg class="a" style="left:736px;top:452px" width="6" height="9" viewBox="0 0 6 9"><path d="M5.5 0L0 4.5L5.5 9Z" fill="#3c4045"/></svg>
<svg class="a" style="left:803px;top:452px" width="6" height="9" viewBox="0 0 6 9"><path d="M0 0L5.5 4.5L0 9Z" fill="#3c4045"/></svg>
<div class="a" style="left:751px;top:447px;width:8px;height:19px;border:1px solid #8f9397;border-radius:2px;background:linear-gradient(#fdfdfd 0,#f4f4f4 40%,#cfd3d7 45%,#dadde0)"></div>
<div class="t" style="left:14.10px;top:306px;font-size:10.6px;color:#7457a3;letter-spacing:-0.265px;white-space:pre">Georges Excel Loan Calculator v3.1    Copyright 2014  George Alzamora  All rights reserved.</div>
<div class="t" style="left:14.10px;top:323px;font-size:10.6px;color:#7457a3;letter-spacing:-0.161px;">See License Terms &amp; Help</div>
<div class="t" style="left:1151.15px;top:306px;font-size:10.6px;color:#7457a3;letter-spacing:-0.005px;">www.georgesbudget.com</div>
<div class="a" style="left:9px;top:683px;width:62px;height:14px;background:#dfe3e8;"></div>
<div class="a" style="left:9px;top:683px;width:62px;height:1px;background:#fafbfc;"></div>
<div class="a" style="left:71px;top:683px;width:1px;height:14px;background:#a3a8ae;"></div>
<div class="a" style="left:15px;top:686px;width:1px;height:7px;background:#3f4450;"></div>
<svg class="a" style="left:16px;top:686px" width="6" height="7" viewBox="0 0 6 7"><path d="M5.5 0V7L0 3.5Z" fill="#3f4450"/></svg>
<svg class="a" style="left:31px;top:686px" width="5" height="7" viewBox="0 0 5 7"><path d="M4.5 0V7L0 3.5Z" fill="#3f4450"/></svg>
<svg class="a" style="left:45px;top:686px" width="5" height="7" viewBox="0 0 5 7"><path d="M0 0V7L4.5 3.5Z" fill="#3f4450"/></svg>
<svg class="a" style="left:59px;top:686px" width="5" height="7" viewBox="0 0 5 7"><path d="M0 0V7L4.5 3.5Z" fill="#3f4450"/></svg>
<div class="a" style="left:64px;top:686px;width:1px;height:7px;background:#3f4450;"></div>
<div class="a" style="left:72px;top:682px;width:158px;height:15px;background:#9fa4ab;"></div>
<div class="a" style="left:73px;top:683px;width:156px;height:14px;background:#e4e7eb;"></div>
<div class="a" style="left:73px;top:683px;width:156px;height:1px;background:#fbfcfd;"></div>
<div class="a" style="left:73px;top:683px;width:1px;height:14px;background:#f7f8f9;"></div>
<svg class="a" style="left:230px;top:682px" width="145" height="16" viewBox="0 0 145 16"><polygon points="0,0 144,0 129.5,15 0,15" fill="#fff"/></svg>
<svg class="a" style="left:359.5px;top:682px" width="231.5" height="16" viewBox="0 0 231.5 16"><polygon points="0.0,15 14.0,0.5 230.5,0.5 230.5,15" fill="#e4e7eb"/><line x1="0.0" y1="15" x2="14.0" y2="0.5" stroke="#9fa4ab" stroke-width="1.1"/></svg>
<div class="a" style="left:374px;top:683px;width:216px;height:1px;background:#fbfcfd;"></div>
<svg class="a" style="left:569.5px;top:682px" width="247.5" height="16" viewBox="0 0 247.5 16"><polygon points="0.0,15 14.0,0.5 246.5,0.5 246.5,15" fill="#e4e7eb"/><line x1="0.0" y1="15" x2="14.0" y2="0.5" stroke="#9fa4ab" stroke-width="1.1"/></svg>
<div class="a" style="left:584px;top:683px;width:232px;height:1px;background:#fbfcfd;"></div>
<svg class="a" style="left:795.5px;top:682px" width="205.5" height="16" viewBox="0 0 205.5 16"><polygon points="0.0,15 14.0,0.5 204.5,0.5 204.5,15" fill="#e4e7eb"/><line x1="0.0" y1="15" x2="14.0" y2="0.5" stroke="#9fa4ab" stroke-width="1.1"/></svg>
<div class="a" style="left:810px;top:683px;width:190px;height:1px;background:#fbfcfd;"></div>
<svg class="a" style="left:991.5px;top:682px" width="46.0" height="16" viewBox="0 0 46.0 16"><polygon points="0.0,15 13.0,0.5 45.0,0.5 32.0,15" fill="#e4e7eb"/><line x1="0.0" y1="15" x2="13.0" y2="0.5" stroke="#9fa4ab" stroke-width="1.1"/><line x1="32.0" y1="15" x2="45.0" y2="0.5" stroke="#9fa4ab" stroke-width="1.1"/></svg>
<div class="a" style="left:1005px;top:683px;width:31px;height:1px;background:#fbfcfd;"></div>
<div class="a" style="left:72px;top:682px;width:158px;height:1px;background:#9fa4ab;"></div>
<div class="a" style="left:373px;top:682px;width:903px;height:1px;background:#9fa4ab;"></div>
<div class="t" style="left:86.10px;top:685px;font-size:12px;color:#3b3b55;letter-spacing:0.118px;">License Terms and Help</div>
<div class="t" style="left:239.10px;top:685px;font-size:12px;color:#2b2b3a;letter-spacing:0.229px;font-weight:bold;">Loan Calc-Compare</div>
<div class="t" style="left:382.10px;top:685px;font-size:12px;color:#3b3b55;letter-spacing:-0.050px;">Loan Calc-Fixed Extra Payments</div>
<div class="t" style="left:593.10px;top:685px;font-size:12px;color:#3b3b55;letter-spacing:-0.015px;">Loan Calc-Custom Extra Payments</div>
<div class="t" style="left:817.10px;top:685px;font-size:12px;color:#3b3b55;letter-spacing:-0.015px;">Loan Calc-No Extra Payments</div>
<svg class="a" style="left:1005px;top:683px" width="15" height="13" viewBox="0 0 15 13"><rect x="3.5" y="3.5" width="10" height="8" rx="1" fill="#dbe6f6" stroke="#4a6fb0"/><circle cx="4" cy="4" r="3" fill="#f7c948"/><path d="M4 0V8M0 4H8M1.5 1.5L6.5 6.5M6.5 1.5L1.5 6.5" stroke="#f0a020" stroke-width="0.8"/></svg>
<div class="a" style="left:9px;top:697px;width:1267px;height:2px;background:#9a9ea5;"></div>
<div class="a" style="left:57px;top:700px;width:1px;height:19px;background:#a7abb1;"></div>
<div class="a" style="left:58px;top:700px;width:1px;height:19px;background:#f5f6f7;"></div>
<div class="t" style="left:16.10px;top:704px;font-size:11.5px;color:#3b3b55;letter-spacing:-0.059px;">Ready</div>
<svg class="a" style="left:67px;top:702px" width="15" height="13" viewBox="0 0 15 13"><rect x="1.5" y="1.5" width="13" height="11" fill="#f4f7fc" stroke="#3a5ea8"/><rect x="2" y="2" width="12" height="2" fill="#5b86d0"/><g fill="#7d9bd3"><rect x="3" y="6" width="3" height="1"/><rect x="7" y="6" width="3" height="1"/><rect x="11" y="6" width="2" height="1"/><rect x="3" y="9" width="3" height="1"/><rect x="7" y="9" width="3" height="1"/><rect x="11" y="9" width="2" height="1"/></g><circle cx="3" cy="3" r="2.6" fill="#e8742c"/></svg>
<div class="a" style="left:92px;top:700px;width:1px;height:19px;background:#a7abb1;"></div>
<div class="a" style="left:93px;top:700px;width:1px;height:19px;background:#f5f6f7;"></div>
<div class="a" style="left:1025px;top:700px;width:1px;height:19px;background:#a7abb1;"></div>
<div class="a" style="left:1026px;top:700px;width:1px;height:19px;background:#f5f6f7;"></div>
<div class="a" style="left:1030px;top:700px;width:19px;height:19px;border:1px solid #e3a948;border-radius:3px;background:linear-gradient(#fff0b8,#fcd96a)"></div>
<svg class="a" style="left:1033px;top:704px" width="13" height="11" viewBox="0 0 13 11"><rect x="0" y="0" width="13" height="11" fill="#4b5059"/><g fill="#fff"><rect x="1" y="1" width="3" height="2"/><rect x="5" y="1" width="3" height="2"/><rect x="9" y="1" width="3" height="2"/><rect x="1" y="4.5" width="3" height="2"/><rect x="5" y="4.5" width="3" height="2"/><rect x="9" y="4.5" width="3" height="2"/><rect x="1" y="8" width="3" height="2"/><rect x="5" y="8" width="3" height="2"/><rect x="9" y="8" width="3" height="2"/></g></svg>
<svg class="a" style="left:1051px;top:703px" width="14" height="12" viewBox="0 0 14 12"><rect x="0.5" y="0.5" width="13" height="11" fill="#a9adb3" stroke="#5a5f67"/><rect x="3.5" y="2.5" width="7" height="7" fill="#f3f4f5" stroke="#6b7078"/><path d="M5 4.5H9M5 6H9M5 7.5H9" stroke="#9096a0" stroke-width="0.7"/></svg>
<svg class="a" style="left:1070px;top:703px" width="14" height="12" viewBox="0 0 14 12"><rect x="0.5" y="0.5" width="13" height="11" fill="#b4b8be" stroke="#5a5f67"/><rect x="1" y="1" width="3" height="6" fill="#fff"/><rect x="5" y="1" width="3" height="6" fill="#fff"/><rect x="8.5" y="1" width="0.8" height="7" fill="#5a5f67"/></svg>
<div class="t" style="left:1095.10px;top:704px;font-size:11.5px;color:#3b3b55;letter-spacing:0.000px;">85%</div>
<div class="a" style="left:1125px;top:701px;width:16px;height:16px;border:1px solid #6e737b;border-radius:50%;background:radial-gradient(circle at 50% 30%,#fff,#e4e6e9)"></div>
<div class="a" style="left:1129px;top:708px;width:8px;height:2px;background:#3d4148;"></div>
<div class="a" style="left:1141px;top:708px;width:101px;height:1px;background:#8f949b;"></div>
<div class="a" style="left:1141px;top:709px;width:101px;height:1px;background:#f4f5f6;"></div>
<svg class="a" style="left:1179px;top:701px" width="10" height="14" viewBox="0 0 10 14"><path d="M0.5 0.5H8.5V9L4.5 13L0.5 9Z" fill="#f7f8f9" stroke="#6e737b"/></svg>
<div class="a" style="left:1190px;top:704px;width:1px;height:10px;background:#9ca1a8;"></div>
<div class="a" style="left:1241px;top:701px;width:16px;height:16px;border:1px solid #6e737b;border-radius:50%;background:radial-gradient(circle at 50% 30%,#fff,#e4e6e9)"></div>
<div class="a" style="left:1245px;top:708px;width:8px;height:2px;background:#3d4148;"></div>
<div class="a" style="left:1248px;top:705px;width:2px;height:8px;background:#3d4148;"></div>
<div class="a" style="left:1273px;top:710px;width:2px;height:2px;background:#aeb2b8;"></div>
<div class="a" style="left:1270px;top:713px;width:2px;height:2px;background:#aeb2b8;"></div>
<div class="a" style="left:1273px;top:713px;width:2px;height:2px;background:#aeb2b8;"></div>
<div class="a" style="left:1267px;top:716px;width:2px;height:2px;background:#aeb2b8;"></div>
<div class="a" style="left:1270px;top:716px;width:2px;height:2px;background:#aeb2b8;"></div>
<div class="a" style="left:1273px;top:716px;width:2px;height:2px;background:#aeb2b8;"></div>
<div class="t" style="left:413.10px;top:12px;font-size:12px;color:#3b3b3b;letter-spacing:-0.227px;white-space:pre">Georges Excel Loan Calculator - Copyright 2015 George Alzamora.xlsx  -  Microsoft Excel</div>
<div class="t" style="left:27.10px;top:40px;font-size:12px;color:#fff;letter-spacing:-0.107px;">File</div>
<div class="t" style="left:81.10px;top:40px;font-size:12px;color:#3b3b3b;letter-spacing:-0.347px;">Home</div>
<div class="t" style="left:139.10px;top:40px;font-size:12px;color:#3b3b3b;letter-spacing:0.000px;">Insert</div>
<div class="t" style="left:196.10px;top:40px;font-size:12px;color:#3b3b3b;letter-spacing:-0.438px;">Page Layout</div>
<div class="t" style="left:286.10px;top:40px;font-size:12px;color:#3b3b3b;letter-spacing:-0.291px;">Formulas</div>
<div class="t" style="left:361.10px;top:40px;font-size:12px;color:#3b3b3b;letter-spacing:-0.127px;">Data</div>
<div class="t" style="left:413.10px;top:40px;font-size:12px;color:#3b3b3b;letter-spacing:-0.272px;">Review</div>
<div class="t" style="left:477.10px;top:40px;font-size:12px;color:#3b3b3b;letter-spacing:0.400px;">View</div>
<div class="t" style="left:530.10px;top:40px;font-size:12px;color:#3b3b3b;letter-spacing:-0.090px;">Developer</div>
<div class="t" style="left:68.10px;top:63px;font-size:13px;color:#000;letter-spacing:-0.570px;">K45</div>
</body></html>
